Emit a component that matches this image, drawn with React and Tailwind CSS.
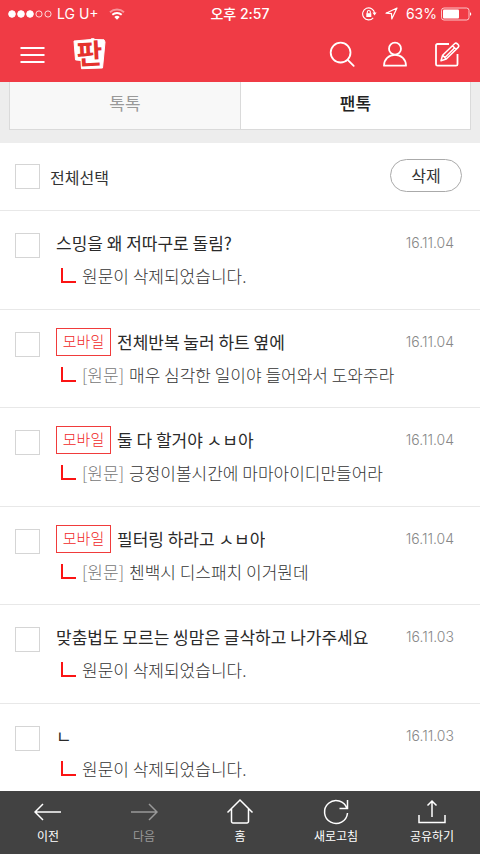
const posts = [
  { id: 1, title: '스밍을 왜 저따구로 돌림?', date: '16.11.04' },
  { id: 2, mobile: true, title: '전체반복 눌러 하트 옆에', original: '매우 심각한 일이야 들어와서 도와주라', date: '16.11.04' },
  { id: 3, mobile: true, title: '둘 다 할거야 ㅅㅂ아', original: '긍정이볼시간에 마마아이디만들어라', date: '16.11.04' },
  { id: 4, mobile: true, title: '필터링 하라고 ㅅㅂ아', original: '첸백시 디스패치 이거뭔데', date: '16.11.04' },
  { id: 5, title: '맞춤법도 모르는 씽맘은 글삭하고 나가주세요', date: '16.11.03' },
  { id: 6, title: 'ㄴ', date: '16.11.03' },
];

function StatusBar() {
  return (
    <div className="grid h-[27px] grid-cols-3 items-center px-2 font-['Inter','Noto_Sans_CJK_KR',sans-serif] text-sm leading-5">
      <div className="flex items-center">
        <svg width="44" height="10" viewBox="0 0 44 10" fill="#fff" stroke="#fff" aria-hidden="true">
          <circle cx="4" cy="5" r="3.3" />
          <circle cx="13" cy="5" r="3.3" />
          <circle cx="22" cy="5" r="3.3" />
          <circle cx="31" cy="5" r="3.1" fill="none" strokeWidth="0.8" />
          <circle cx="40" cy="5" r="3.1" fill="none" strokeWidth="0.8" />
        </svg>
        <span className="ml-[5px] whitespace-nowrap">LG U+</span>
        <svg className="ml-[10px]" width="16" height="12" viewBox="0 0 16 12" fill="none" stroke="#fff" strokeWidth="1.9" aria-hidden="true">
          <path d="M1 4.2a10.3 10.3 0 0 1 14 0" opacity=".45" />
          <path d="M3.3 6.8a7 7 0 0 1 9.4 0" />
          <path d="M8 11.8 5.3 9.1a4 4 0 0 1 5.4 0z" fill="#fff" stroke="none" />
        </svg>
      </div>
      <span className="whitespace-nowrap text-center font-medium">오후 2:57</span>
      <div className="flex items-center justify-end">
        <svg width="15" height="14" viewBox="0 0 15 14" fill="none" stroke="#fff" strokeWidth="1.1" aria-hidden="true">
          <path d="M11.2 10.8A6 6 0 1 1 12.6 6" />
          <path d="M10.4 5.6h4.2l-2.1 2.8z" fill="#fff" stroke="none" />
          <rect x="4.3" y="6.2" width="5" height="3.8" fill="#fff" stroke="none" />
          <path d="M5.3 6.4V5a1.5 1.5 0 0 1 3 0v1.4" />
        </svg>
        <svg className="ml-2" width="13" height="13" viewBox="0 0 13 13" fill="none" stroke="#fff" strokeWidth="1.2" strokeLinejoin="round" aria-hidden="true">
          <path d="M12 1 1 6.2l5.5.4.3 5.4z" />
        </svg>
        <span className="ml-2">63%</span>
        <svg className="ml-1" width="31" height="14" viewBox="0 0 31 14" aria-hidden="true">
          <rect x="0.5" y="1" width="27.5" height="12" rx="2.5" fill="none" stroke="#fff" strokeOpacity=".7" />
          <rect x="2" y="2.5" width="16" height="9" rx="1" fill="#fff" />
          <path d="M29 5.2c1.6.3 1.6 3.3 0 3.6z" fill="#fff" />
        </svg>
      </div>
    </div>
  );
}

function Header() {
  return (
    <header className="shrink-0 bg-[#f03b45] text-white">
      <StatusBar />
      <div className="flex h-[55px] items-center px-5">
        <button type="button" aria-label="메뉴">
          <svg width="25" height="18" viewBox="0 0 25 18" stroke="#fff" strokeWidth="2" aria-hidden="true">
            <path d="M.5 2h24M.5 9h24M.5 16h24" />
          </svg>
        </button>
        <a href="#home" className="relative ml-7 block">
          <svg width="33" height="33" viewBox="0 0 33 33" aria-hidden="true">
            <path d="M1 3 18 1.500V.9L20.500.6 22 1.500l9 .3 1 2.200-1.500 16-1 10-21 .7L8 22.500l-5.500-.6z" fill="#fff" stroke="#fff" strokeLinejoin="round" />
          </svg>
          <span className="absolute inset-x-0 top-0 flex -rotate-3 items-center justify-center text-[28px] font-bold leading-7 text-[#e5322d]">판</span>
        </a>
        <div className="ml-auto flex items-center gap-6">
          <button type="button" aria-label="검색">
            <svg width="28" height="28" viewBox="0 0 28 28" fill="none" stroke="#fff" strokeWidth="1.8" strokeLinecap="round" aria-hidden="true">
              <circle cx="12.6" cy="11.6" r="9.9" />
              <path d="m19.7 18.800 6 6" />
            </svg>
          </button>
          <button type="button" aria-label="내 정보">
            <svg width="28" height="28" viewBox="0 0 28 28" fill="none" stroke="#fff" strokeWidth="1.8" strokeLinejoin="round" aria-hidden="true">
              <circle cx="15" cy="7.7" r="6" />
              <path d="M4 24.700c0-6.500 4.800-10.800 11-10.800s11 4.300 11 10.800z" />
            </svg>
          </button>
          <button type="button" aria-label="글쓰기">
            <svg width="28" height="28" viewBox="0 0 28 28" fill="none" stroke="#fff" strokeWidth="1.8" strokeLinejoin="round" aria-hidden="true">
              <path d="M17 3H5.500A1.500 1.500 0 0 0 4 4.500v18.700a1.500 1.500 0 0 0 1.500 1.500H24a1.500 1.500 0 0 0 1.500-1.500V13" />
              <path d="m9 19.800 1.600-5.600L22.800 2.500c1.500-1.300 5 1.800 3.600 3.600L14.300 18zM20.500 4.800l3.800 3.800M10.700 14.400l3.400 3.400M22.500 7 12.500 17" strokeWidth="1.5" />
            </svg>
          </button>
        </div>
      </div>
    </header>
  );
}

function Tabs() {
  return (
    <nav className="bg-[#ededed] px-[9px] pb-[13px]">
      <div className="grid h-12 grid-cols-2 border border-t-0 border-[#dadada] text-[17px]">
        <button type="button" className="bg-[#f8f8f8] pb-[6px] text-[#999]">톡톡</button>
        <button type="button" className="border-l border-[#dadada] bg-white pb-[6px] font-medium text-[#222]">팬톡</button>
      </div>
    </nav>
  );
}

const checkboxClass = 'size-[25px] shrink-0 appearance-none border border-[#d5d5d5] bg-white checked:bg-[#f03b45]';

function Post({ post }) {
  return (
    <li className="flex border-b border-[#e8e8e8] pl-[15px] pr-[26px] odd:h-[99px] even:h-[98px]">
      <input type="checkbox" aria-label={post.title} className={`${checkboxClass} mt-[22px]`} />
      <div className="ml-4 flex min-w-0 flex-1 flex-col gap-[5px] pt-[18px]">
        <div className="flex items-center">
          {post.mobile && (
            <span className="mr-[6px] flex h-7 w-[55px] shrink-0 items-center justify-center border border-[#f03b3b] pb-[2px] text-[15px] font-light text-[#f01f1f]">모바일</span>
          )}
          <a href={`#post-${post.id}`} className="truncate text-[17px] leading-7 text-[#2a2a2a]">{post.title}</a>
          <time className="ml-auto shrink-0 pl-2 font-['Inter',sans-serif] text-sm font-light leading-7 text-[#888]">{post.date}</time>
        </div>
        <p className="flex items-center pl-[5px] text-[17px] font-light leading-7 text-[#333]">
          <svg className="mr-[6px] shrink-0" width="15" height="16" viewBox="0 0 15 16" fill="none" stroke="#fb1414" strokeWidth="2" aria-hidden="true">
            <path d="M1 0v14h14" />
          </svg>
          {post.original ? (
            <>
              <span className="mr-[5px] text-[#777]">[원문]</span>
              <span className="whitespace-nowrap">{post.original}</span>
            </>
          ) : (
            '원문이 삭제되었습니다.'
          )}
        </p>
      </div>
    </li>
  );
}

const toolbar = [
  { label: '이전', icon: <path d="M27 14H1M9 6l-8 8 8 8" /> },
  { label: '다음', disabled: true, icon: <path d="M1 14h26M19 6l8 8-8 8" /> },
  { label: '홈', icon: <path d="M1.500 14.500 14 2l12.500 12.500M5.500 11v12.500a1.500 1.500 0 0 0 1.500 1.500h14a1.500 1.500 0 0 0 1.500-1.500V11" /> },
  { label: '새로고침', icon: <path d="M25.500 15A11.500 11.500 0 1 1 25 10.500M25.500 2v8.500H17.500" /> },
  { label: '공유하기', icon: <path d="M14 19V3M9.500 7.500 14 3l4.500 4.500M1 17v7.500h26V17" /> },
];

function Toolbar() {
  return (
    <footer className="grid h-[63px] shrink-0 grid-cols-5 bg-[#424242] text-white">
      {toolbar.map((item) => (
        <button key={item.label} type="button" disabled={item.disabled} className="flex flex-col items-center gap-[2px] pt-[7px] disabled:text-[#999]">
          <svg width="28" height="28" viewBox="0 0 28 28" fill="none" stroke="currentColor" strokeWidth="1.5" aria-hidden="true">
            {item.icon}
          </svg>
          <span className="text-xs leading-4">{item.label}</span>
        </button>
      ))}
    </footer>
  );
}

export default function App() {
  return (
    <div className="flex h-screen flex-col bg-white font-['Noto_Sans_CJK_KR',sans-serif]">
      <Header />
      <main className="min-h-0 flex-1 overflow-hidden">
        <Tabs />
        <div className="flex h-[68px] items-center justify-between border-b border-[#e8e8e8] pl-[15px] pr-[18px]">
          <label className="flex items-center gap-[10px] text-base text-[#333]">
            <input type="checkbox" className={checkboxClass} />
            전체선택
          </label>
          <button type="button" className="mb-[2px] flex h-[33px] w-[72px] items-center justify-center rounded-full border border-[#aaa] pb-[2px] text-base text-[#333]">삭제</button>
        </div>
        <ul>
          {posts.map((post) => (
            <Post key={post.id} post={post} />
          ))}
        </ul>
      </main>
      <Toolbar />
    </div>
  );
}
